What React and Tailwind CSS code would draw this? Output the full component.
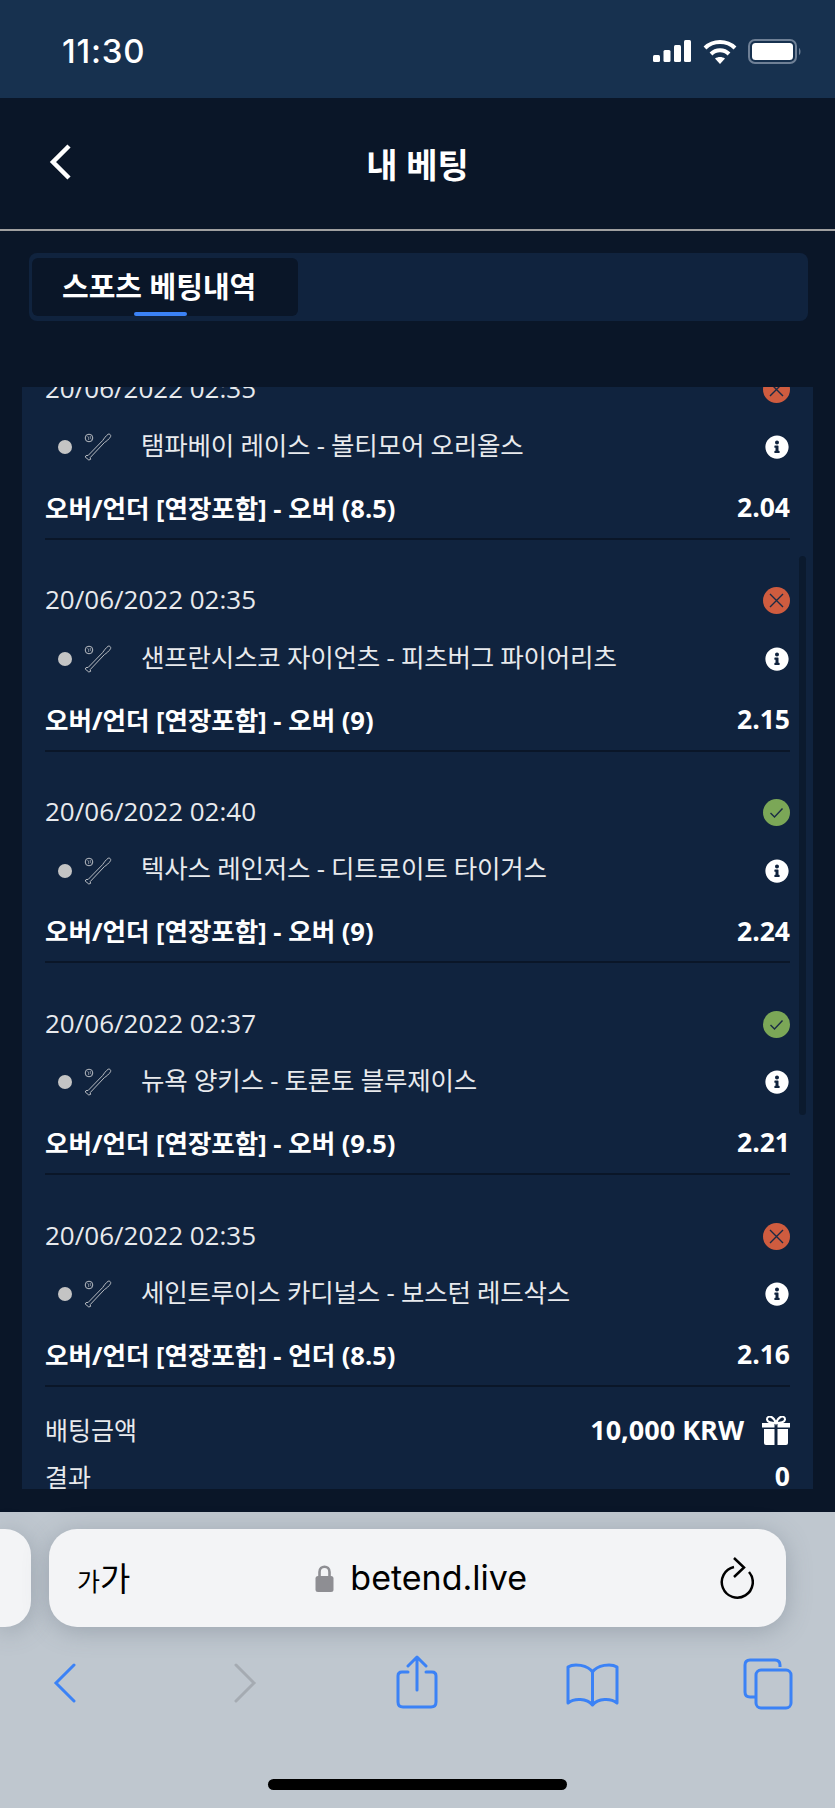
import React from "react";
import { FaInfoCircle } from "react-icons/fa";

const font = { fontFamily: '"Open Sans","Noto Sans CJK KR",sans-serif' };

const rows = [
  ["20/06/2022 02:35", "탬파베이 레이스 - 볼티모어 오리올스", "오버/언더 [연장포함] - 오버 (8.5)", "2.04", false],
  ["20/06/2022 02:35", "샌프란시스코 자이언츠 - 피츠버그 파이어리츠", "오버/언더 [연장포함] - 오버 (9)", "2.15", false],
  ["20/06/2022 02:40", "텍사스 레인저스 - 디트로이트 타이거스", "오버/언더 [연장포함] - 오버 (9)", "2.24", true],
  ["20/06/2022 02:37", "뉴욕 양키스 - 토론토 블루제이스", "오버/언더 [연장포함] - 오버 (9.5)", "2.21", true],
  ["20/06/2022 02:35", "세인트루이스 카디널스 - 보스턴 레드삭스", "오버/언더 [연장포함] - 언더 (8.5)", "2.16", false],
];

function Bat() {
  return (
    <svg width="28" height="28" viewBox="0 0 28 28" fill="none" stroke="#b9bdc3" strokeWidth="1" strokeLinejoin="round">
      <circle cx="5" cy="5" r="3.8" />
      <path d="M3.6 3.2c1 1 1.4 2.4 1 3.8M6.4 3c-.4 1.2 0 2.6 1 3.4" strokeWidth="0.7" />
      <path d="M4.2 22.4 L18.6 7.6 C20 5.6 22 2.6 24.2 1.2 C25.6.6 27.2 2 26.6 3.6 C25.4 6 22.2 8.4 20.4 9.6 L6.2 24.6 L6.6 26.4 L4.8 27 L1.2 24 L2 22.6 Z" />
    </svg>
  );
}

function Gift() {
  return (
    <svg width="28" height="29" viewBox="0 0 28 29" fill="white">
      <path d="M2 13 H12.5 V29 H4 Q2 29 2 27 Z" />
      <path d="M15.5 13 H26 V27 Q26 29 24 29 H15.5 Z" />
      <path d="M0 7 H12.5 V11.5 H0 Z M15.5 7 H28 V11.5 H15.5 Z" />
      <path d="M14 7 C10 7 5.5 6.5 5 3.5 C4.8 1 7.5 0 9.5 1 C11.5 2 13 4.5 14 7 C15 4.5 16.5 2 18.5 1 C20.5 0 23.2 1 23 3.5 C22.5 6.5 18 7 14 7 Z" fill="none" stroke="white" strokeWidth="2" />
    </svg>
  );
}

function Result({ win }) {
  return (
    <span className={`flex h-[27px] w-[27px] items-center justify-center rounded-full ${win ? "bg-[#7ba757]" : "bg-[#cf5c3f]"}`}>
      <svg width="17" height="17" viewBox="0 0 17 17" fill="none" stroke="#1a2b45" strokeWidth="1.4">
        {win ? <path d="M2.5 9 L6.5 13 L14.5 4.5" /> : <path d="M2 2 L15 15 M15 2 L2 15" />}
      </svg>
    </span>
  );
}

function Row({ date, match, market, odd, win }) {
  return (
    <div className="h-[211.75px] border-b-2 border-[#0a1628] pt-[41px]">
      <div className="flex h-[40px] items-center justify-between">
        <span className="pb-[2px] text-[26px] text-[#e8eaed]">{date}</span>
        <Result win={win} />
      </div>
      <div className="mt-[18px] flex h-[40px] items-center justify-between">
        <div className="flex items-center">
          <span className="ml-[13px] h-[14px] w-[14px] rounded-full bg-[#c4c4c4]" />
          <span className="ml-[12px] flex"><Bat /></span>
          <span className="ml-[29px] pb-[4px] text-[25.5px] tracking-[-0.2px] text-[#e8eaed]">{match}</span>
        </div>
        <FaInfoCircle className="mr-[1px] text-[24px] text-white" />
      </div>
      <div className="mt-[22px] flex h-[40px] items-center justify-between pb-[2px] font-bold text-white">
        <span className="text-[25.5px]">{market}</span>
        <span className="text-[26.5px]">{odd}</span>
      </div>
    </div>
  );
}

export default function App() {
  return (
    <div className="relative h-[1808px] w-[835px] overflow-hidden bg-[#0a1628]" style={font}>
      <div className="flex h-[98px] items-center justify-between bg-[#17314f] pl-[62px] pr-[33px] text-white">
        <span className="pt-[5px] text-[33px] font-medium tracking-[0.8px]" style={{ fontFamily: "Inter,sans-serif" }}>11:30</span>
        <div className="flex items-center pt-[4px]">
          <svg width="38" height="22" viewBox="0 0 38 22" fill="white">
            <rect x="0" y="15" width="7" height="7" rx="1.5" />
            <rect x="10.5" y="10" width="7" height="12" rx="1.5" />
            <rect x="21" y="5" width="7" height="17" rx="1.5" />
            <rect x="31" y="0" width="7" height="22" rx="1.5" />
          </svg>
          <svg className="ml-[12px]" width="34" height="25" viewBox="0 0 34 25" fill="none" stroke="white" strokeWidth="4">
            <path d="M2 9 C10 1 24 1 32 9" />
            <path d="M8 15 C13 10 21 10 26 15" />
            <path d="M17 25 L12 19.5 C15 17.5 19 17.5 22 19.5 Z" fill="white" stroke="none" />
          </svg>
          <svg className="ml-[11px]" width="54" height="25" viewBox="0 0 54 25" fill="none">
            <rect x="1" y="1" width="47" height="23" rx="6" stroke="#6f8096" strokeWidth="2" />
            <rect x="4" y="4" width="41" height="17" rx="3.5" fill="white" />
            <path d="M51 9 C53 10 53 15 51 16 Z" fill="#6f8096" />
          </svg>
        </div>
      </div>

      <div className="relative flex h-[133px] items-center justify-center border-b-2 border-[#a0a0a0] pt-[2px] text-[34px] leading-none text-white">
        <svg className="absolute left-[48px] top-[45px]" width="26" height="38" viewBox="0 0 26 38" fill="none" stroke="white" strokeWidth="4.5">
          <path d="M21 3 L5 19 L21 35" />
        </svg>
        <span className="font-semibold">내 베팅</span>
      </div>

      <div className="mx-[29px] mt-[22px] h-[68px] w-[779px] rounded-[8px] bg-[#10233e] px-[3px] py-[5px]">
        <div className="relative flex h-[58px] w-[266px] items-center rounded-[6px] bg-[#0a1628] pl-[30px] text-[29px] font-semibold text-white">
          스포츠 베팅내역
          <span className="absolute bottom-0 left-[102px] h-[4px] w-[53px] rounded-full bg-[#3b82f6]" />
        </div>
      </div>

      <div className="absolute left-[22px] top-[387px] h-[1102px] w-[791px] overflow-hidden bg-[#10233e] px-[23px]">
        <div className="-mt-[59px]">
          {rows.map((r, i) => (
            <Row key={i} date={r[0]} match={r[1]} market={r[2]} odd={r[3]} win={r[4]} />
          ))}
          <div className="mt-[20px] flex h-[47px] items-center justify-between text-[25px] text-[#e8eaed]">
            <span>배팅금액</span>
            <span className="flex items-center text-[27px] font-bold text-white">
              10,000 KRW
              <span className="ml-[18px] flex"><Gift /></span>
            </span>
          </div>
          <div className="flex h-[47px] items-center justify-between text-[25px] text-[#e8eaed]">
            <span>결과</span>
            <span className="text-[26.5px] font-bold text-white">0</span>
          </div>
        </div>
        <span className="absolute left-[777px] top-[169px] h-[559px] w-[7px] rounded-full bg-[#0b1a2e]" />
      </div>

      <div className="absolute inset-x-0 bottom-0 h-[296px] bg-[#bfc7cf]">
        <div className="absolute left-0 top-[17px] h-[98px] w-[31px] rounded-r-[26px] bg-[#f3f4f6] shadow-[0_4px_24px_rgba(90,100,115,0.35)]" />
        <div className="absolute left-[49px] top-[17px] flex h-[98px] w-[737px] items-center justify-between rounded-[28px] bg-[#f3f4f6] pl-[28px] pr-[32px] text-black shadow-[0_4px_24px_rgba(90,100,115,0.35)]">
          <span className="flex items-baseline" style={{ fontFamily: '"Noto Sans CJK KR",sans-serif' }}>
            <span className="text-[25px]">가</span><span className="text-[33px]">가</span>
          </span>
          <span className="mr-[8px] flex items-center" style={{ fontFamily: "Inter,sans-serif" }}>
            <svg width="19" height="28" viewBox="0 0 19 28" fill="none">
              <path d="M4.5 13 V8 C4.5 1 14.5 1 14.5 8 V13" stroke="#8e8e93" strokeWidth="2.6" />
              <rect x="0.5" y="12" width="18" height="16" rx="2.5" fill="#8e8e93" />
            </svg>
            <span className="ml-[16px] text-[34px] leading-none">betend.live</span>
          </span>
          <svg width="34" height="42" viewBox="0 0 34 42" fill="none" stroke="black" strokeWidth="2.5">
            <path d="M14 10 A15.5 15.5 0 1 0 29 15" />
            <path d="M14 1 L24 10.5 L14 20" />
          </svg>
        </div>

        <svg className="absolute left-[53px] top-[151px]" width="24" height="40" viewBox="0 0 24 40" fill="none" stroke="#3b82f6" strokeWidth="3" strokeLinecap="round">
          <path d="M21 2 L3 20 L21 38" />
        </svg>
        <svg className="absolute left-[233px] top-[151px]" width="24" height="40" viewBox="0 0 24 40" fill="none" stroke="#a5abb2" strokeWidth="3" strokeLinecap="round">
          <path d="M3 2 L21 20 L3 38" />
        </svg>
        <svg className="absolute left-[396px] top-[143px]" width="42" height="54" viewBox="0 0 42 54" fill="none" stroke="#3b82f6" strokeWidth="3" strokeLinecap="round" strokeLinejoin="round">
          <path d="M12 17 H6 Q2 17 2 21 V47 Q2 52 7 52 H35 Q40 52 40 47 V21 Q40 17 36 17 H30" />
          <path d="M21 35 V3 M12 11 L21 2 L30 11" />
        </svg>
        <svg className="absolute left-[566px] top-[151px]" width="53" height="44" viewBox="0 0 53 44" fill="none" stroke="#3b82f6" strokeWidth="3" strokeLinejoin="round">
          <path d="M26.5 9 C22 2 8 0 2 4 V40 C8 35 21 35 26.5 42 C32 35 45 35 51 40 V4 C45 0 31 2 26.5 9 Z" />
          <path d="M26.5 9 V42" />
        </svg>
        <svg className="absolute left-[743px] top-[146px]" width="50" height="52" viewBox="0 0 50 52" fill="none" stroke="#3b82f6" strokeWidth="3">
          <path d="M37 9 V7 Q37 2 32 2 H7 Q2 2 2 7 V34 Q2 39 7 39 H13" />
          <rect x="13" y="12" width="35" height="38" rx="5" />
        </svg>
        <div className="absolute left-[268px] top-[267px] h-[11px] w-[299px] rounded-full bg-black" />
      </div>
    </div>
  );
}
